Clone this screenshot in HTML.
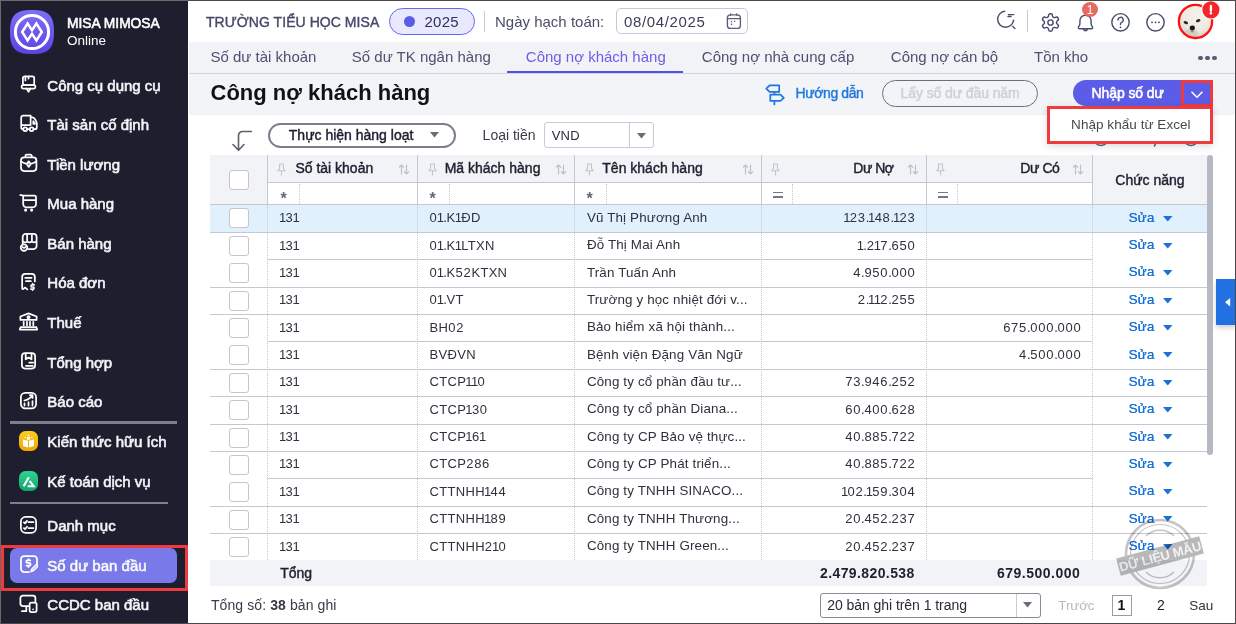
<!DOCTYPE html>
<html><head><meta charset="utf-8"><title>MISA</title>
<style>
html,body{margin:0;padding:0;}
body{width:1236px;height:624px;overflow:hidden;position:relative;background:#fff;font-family:"Liberation Sans", sans-serif;}
.t{position:absolute;white-space:nowrap;line-height:1;}
.b{position:absolute;box-sizing:border-box;}
</style></head><body>

<div class="b" style="left:0px;top:0px;width:188px;height:624px;background:#1e1f2e;"></div>
<svg class="b" style="left:10px;top:10px" width="44" height="44" viewBox="0 0 44 44">
<defs><linearGradient id="lg" x1="0" y1="0" x2="0" y2="1"><stop offset="0" stop-color="#7d6ff7"/><stop offset="1" stop-color="#5a45e2"/></linearGradient></defs>
<path d="M22 0 C38.5 0 44 5.5 44 22 C44 38.5 38.5 44 22 44 C5.5 44 0 38.5 0 22 C0 5.5 5.5 0 22 0 Z" fill="url(#lg)"/>
<circle cx="22" cy="22" r="16.6" fill="none" stroke="#fff" stroke-width="3"/>
<path d="M12.2 22 L17.6 13.6 L22 20.2 L26.4 13.6 L31.8 22 L26.4 30.4 L22 23.8 L17.6 30.4 Z" fill="none" stroke="#fff" stroke-width="2.5" stroke-linejoin="miter"/>
</svg>
<div class="t" style="left:67px;top:16.72px;font-size:13.8px;color:#ffffff;-webkit-text-stroke:0.55px #fff;">MISA MIMOSA</div>
<div class="t" style="left:67px;top:33.57px;font-size:13.5px;color:#ffffff;">Online</div>
<div class="b" style="left:1px;top:545px;width:187px;height:46px;border:3px solid #ee3b3f;"></div>
<div class="b" style="left:10px;top:548px;width:167px;height:35px;background:#7979ea;border-radius:7px;"></div>
<div class="b" style="left:10px;top:421px;width:167px;height:3px;background:#7d7f8c;"></div>
<div class="b" style="left:10px;top:502px;width:158px;height:2px;background:#7d7f8c;"></div>
<div class="t" style="left:47.3px;top:77.70px;font-size:15px;color:#f3f3f8;-webkit-text-stroke:0.6px #f3f3f8;">Công cụ dụng cụ</div>
<div class="t" style="left:47.3px;top:117.25px;font-size:15px;color:#f3f3f8;-webkit-text-stroke:0.6px #f3f3f8;">Tài sản cố định</div>
<div class="t" style="left:47.3px;top:156.80px;font-size:15px;color:#f3f3f8;-webkit-text-stroke:0.6px #f3f3f8;">Tiền lương</div>
<div class="t" style="left:47.3px;top:196.35px;font-size:15px;color:#f3f3f8;-webkit-text-stroke:0.6px #f3f3f8;">Mua hàng</div>
<div class="t" style="left:47.3px;top:235.90px;font-size:15px;color:#f3f3f8;-webkit-text-stroke:0.6px #f3f3f8;">Bán hàng</div>
<div class="t" style="left:47.3px;top:275.45px;font-size:15px;color:#f3f3f8;-webkit-text-stroke:0.6px #f3f3f8;">Hóa đơn</div>
<div class="t" style="left:47.3px;top:315.00px;font-size:15px;color:#f3f3f8;-webkit-text-stroke:0.6px #f3f3f8;">Thuế</div>
<div class="t" style="left:47.3px;top:354.55px;font-size:15px;color:#f3f3f8;-webkit-text-stroke:0.6px #f3f3f8;">Tổng hợp</div>
<div class="t" style="left:47.3px;top:394.10px;font-size:15px;color:#f3f3f8;-webkit-text-stroke:0.6px #f3f3f8;">Báo cáo</div>
<div class="t" style="left:47.3px;top:434.20px;font-size:15px;color:#f3f3f8;-webkit-text-stroke:0.6px #f3f3f8;">Kiến thức hữu ích</div>
<div class="t" style="left:47.3px;top:473.70px;font-size:15px;color:#f3f3f8;-webkit-text-stroke:0.6px #f3f3f8;">Kế toán dịch vụ</div>
<div class="t" style="left:47.3px;top:518.30px;font-size:15px;color:#f3f3f8;-webkit-text-stroke:0.6px #f3f3f8;">Danh mục</div>
<div class="t" style="left:47.3px;top:557.90px;font-size:15px;color:#ffffff;-webkit-text-stroke:0.6px #f3f3f8;">Số dư ban đầu</div>
<div class="t" style="left:47.3px;top:597.30px;font-size:15px;color:#f3f3f8;-webkit-text-stroke:0.6px #f3f3f8;">CCDC ban đầu</div>
<svg class="b" style="left:19px;top:73px;" width="20" height="22" viewBox="0 0 20 22"><rect fill="none" stroke="#fff" stroke-width="1.75" stroke-linecap="round" stroke-linejoin="round" x="3.9" y="3.3" width="11.3" height="8.7" rx="1.8"/><path fill="none" stroke="#fff" stroke-width="1.75" stroke-linecap="round" stroke-linejoin="round" d="M6.4 3.6v3.8 M9.5 3.6v2"/><rect fill="none" stroke="#fff" stroke-width="1.75" stroke-linecap="round" stroke-linejoin="round" x="2.6" y="12.1" width="13.8" height="3.4" rx="1.5"/><path fill="none" stroke="#fff" stroke-width="1.75" stroke-linecap="round" stroke-linejoin="round" d="M7.6 15.6l1.9 3.2 1.9-3.2"/></svg>
<svg class="b" style="left:18px;top:113px;" width="22" height="20" viewBox="0 0 22 20"><path fill="none" stroke="#fff" stroke-width="1.75" stroke-linecap="round" stroke-linejoin="round" d="M5.3 2.6H12.6V4.3H14.4C16.5 4.3 18.8 8.6 18.8 11.1V14.2C18.8 15.3 18.1 16.2 17 16.2H15.6 M11.6 16.2H9.2 M5.2 16.2C4 16.2 3.2 15.4 3.2 14.2V4.7C3.2 3.5 4.1 2.6 5.3 2.6 M3.2 12.1H12.6V2.6 M15.3 8.2l1.5 2.6h-1.5z"/><circle fill="none" stroke="#fff" stroke-width="1.75" stroke-linecap="round" stroke-linejoin="round" cx="7.2" cy="16.3" r="1.9"/><circle fill="none" stroke="#fff" stroke-width="1.75" stroke-linecap="round" stroke-linejoin="round" cx="13.6" cy="16.3" r="1.9"/></svg>
<svg class="b" style="left:18px;top:152px;" width="22" height="22" viewBox="0 0 22 22"><path fill="none" stroke="#fff" stroke-width="1.75" stroke-linecap="round" stroke-linejoin="round" d="M7.4 5.2V4a1.4 1.4 0 0 1 1.4-1.4h3.6A1.4 1.4 0 0 1 13.8 4v1.2"/><rect fill="none" stroke="#fff" stroke-width="1.75" stroke-linecap="round" stroke-linejoin="round" x="3" y="5.3" width="15.4" height="13.7" rx="3.2"/><path fill="none" stroke="#fff" stroke-width="1.75" stroke-linecap="round" stroke-linejoin="round" d="M3.1 9.6C5.3 10.9 7.3 11.6 8.7 11.9 M18.3 9.6C16.1 10.9 14.1 11.6 12.7 11.9 M10.7 9.3l2 2.8-2 2.8-2-2.8z"/><circle cx="10.7" cy="11.2" r="0.65" fill="#fff"/><circle cx="10.7" cy="13.1" r="0.65" fill="#fff"/></svg>
<svg class="b" style="left:18px;top:193px;" width="20" height="20" viewBox="0 0 20 20"><path fill="none" stroke="#fff" stroke-width="1.75" stroke-linecap="round" stroke-linejoin="round" d="M2.2 2H3.3C4.4 2 5.2 2.9 5.2 4V11.3A3 3 0 0 0 8.2 14.3H15A3 3 0 0 0 18 11.3V4.1A1.5 1.5 0 0 0 16.5 2.6H4.6 M6.8 7.1H18"/><circle cx="7.6" cy="17.1" r="1.55" fill="#fff"/><circle cx="13.6" cy="17.1" r="1.55" fill="#fff"/></svg>
<svg class="b" style="left:19px;top:231px;" width="21" height="21" viewBox="0 0 21 21"><path fill="none" stroke="#fff" stroke-width="1.75" stroke-linecap="round" stroke-linejoin="round" d="M3.7 12.4V5.9A3 3 0 0 1 6.7 2.9H14.6A3 3 0 0 1 17.6 5.9V15.1A3 3 0 0 1 14.6 18.1H8.9 M3.7 10.2Q5.9 12.2 8.1 10.6Q10.5 12.2 12.9 10.6Q15.3 12.2 17.6 10.2 M8.1 3.2V10.4 M12.9 3.2V10.4"/><circle fill="none" stroke="#fff" stroke-width="1.75" stroke-linecap="round" stroke-linejoin="round" cx="5" cy="16.6" r="3.3" fill="#1e1f2e"/><path fill="none" stroke="#fff" stroke-width="1.75" stroke-linecap="round" stroke-linejoin="round" d="M3.6 15.9Q5 17.9 6.4 15.9"/></svg>
<svg class="b" style="left:18px;top:271px;" width="22" height="22" viewBox="0 0 22 22"><path fill="none" stroke="#fff" stroke-width="1.75" stroke-linecap="round" stroke-linejoin="round" d="M16.85 10.4V6a3.2 3.2 0 0 0-3.2-3.2H7.35a3.2 3.2 0 0 0-3.2 3.2V17.4c0 .6.5.8 1 .5l2-1.3 2.2 1.8 M7.2 6.8h6.4 M8 10.2h4.8"/><path fill="none" stroke="#fff" stroke-width="1.6" stroke-linecap="round" stroke-linejoin="round" d="M16.3 13.9h-2.3a1.05 1.05 0 0 0 0 2.1h1.1a1.05 1.05 0 0 1 0 2.1h-2.3 M14.6 12.6v1 M14.6 18.2v1"/></svg>
<svg class="b" style="left:18px;top:311px;" width="22" height="22" viewBox="0 0 22 22"><path fill="none" stroke="#fff" stroke-width="1.75" stroke-linecap="round" stroke-linejoin="round" d="M10.5 2.4L18.6 5.5V8.9H2.4V5.5Z M5.7 10.8v3.4 M9 10.8v3.4 M12 10.8v3.4 M15.3 10.8v3.4 M2.6 16.2H18.4L19.2 18.6H1.8Z"/><circle fill="none" stroke="#fff" stroke-width="1.75" stroke-linecap="round" stroke-linejoin="round" cx="10.5" cy="6.2" r="1.1"/></svg>
<svg class="b" style="left:20px;top:351px;" width="18" height="20" viewBox="0 0 18 20"><rect fill="none" stroke="#fff" stroke-width="1.75" stroke-linecap="round" stroke-linejoin="round" x="1.9" y="2.2" width="13.2" height="15.3" rx="3.2"/><path fill="none" stroke="#fff" stroke-width="1.75" stroke-linecap="round" stroke-linejoin="round" d="M5.7 2.4V8.3L8.6 6.5L11.5 8.3V2.4 M9.2 11.6h4 M5.9 14.8h6.9"/></svg>
<svg class="b" style="left:19px;top:391px;" width="19" height="19" viewBox="0 0 19 19"><rect fill="none" stroke="#fff" stroke-width="1.75" stroke-linecap="round" stroke-linejoin="round" x="1.9" y="1.8" width="15.2" height="15.5" rx="4.3"/><path fill="none" stroke="#fff" stroke-width="1.75" stroke-linecap="round" stroke-linejoin="round" d="M5.4 9.5Q10.2 8.6 13.3 4.5 M10.9 4.2H13.6V6.9 M5.5 12.3v2.3 M9.5 11v3.6 M13.5 10v4.6"/></svg>
<svg class="b" style="left:19px;top:431px;" width="20" height="20" viewBox="0 0 20 20"><defs><linearGradient id="yl" x1="0" y1="0" x2="0" y2="1"><stop offset="0" stop-color="#fbcf1f"/><stop offset="1" stop-color="#f0a600"/></linearGradient></defs><rect x="0" y="0" width="19" height="20" rx="6.5" fill="url(#yl)"/><path d="M4 8.6L9 9.8v6.6L4 15z M15 8.6L10 9.8v6.6L15 15z" fill="#fff"/><rect x="8" y="5.8" width="3" height="2.8" fill="#fff"/><circle cx="6.3" cy="6.4" r="0.7" fill="#fff"/><circle cx="9.5" cy="4.2" r="0.7" fill="#fff"/><circle cx="12.7" cy="6.4" r="0.7" fill="#fff"/></svg>
<svg class="b" style="left:19px;top:471px;" width="20" height="20" viewBox="0 0 20 20"><defs><linearGradient id="gl" x1="0" y1="0" x2="0" y2="1"><stop offset="0" stop-color="#2fd391"/><stop offset="1" stop-color="#12a56d"/></linearGradient></defs><rect x="0" y="0" width="19" height="20" rx="6.5" fill="url(#gl)"/><path d="M4.6 15.2L9.8 6.3 M10.6 9.9L14.6 15.2H8.6" fill="none" stroke="#fff" stroke-width="2.1" stroke-linejoin="miter" stroke-linecap="butt"/></svg>
<svg class="b" style="left:19px;top:515px;" width="20" height="20" viewBox="0 0 20 20"><rect fill="none" stroke="#fff" stroke-width="1.75" stroke-linecap="round" stroke-linejoin="round" x="1.9" y="1.9" width="15.2" height="16" rx="4.8"/><path fill="none" stroke="#fff" stroke-width="1.75" stroke-linecap="round" stroke-linejoin="round" d="M4.9 7.4L6 8.4L8 5.9 M4.9 13.2L6 14.2L8 11.7 M9.5 7.2h5 M9.5 13.1h5"/></svg>
<svg class="b" style="left:20px;top:555px;" width="18" height="18" viewBox="0 0 18 18"><path fill="none" stroke="#fff" stroke-width="1.75" stroke-linecap="round" stroke-linejoin="round" d="M9 17H4.3A3.3 3.3 0 0 1 1 13.7V4.3A3.3 3.3 0 0 1 4.3 1h9.4A3.3 3.3 0 0 1 17 4.3V9"/><path fill="none" stroke="#fff" stroke-width="1.75" stroke-linecap="round" stroke-linejoin="round" d="M10.3 5.3H7.5a1.3 1.3 0 0 0 0 2.6h1.8a1.3 1.3 0 0 1 0 2.6H6.5 M8.5 4v1.3 M8.5 10.5v1.5"/><path fill="none" stroke="#fff" stroke-width="1.75" stroke-linecap="round" stroke-linejoin="round" d="M11 16.5l1-2.5l4-4a1.1 1.1 0 0 1 1.5 1.5l-4 4z"/></svg>
<svg class="b" style="left:19px;top:594px;" width="20" height="20" viewBox="0 0 20 20"><path fill="none" stroke="#fff" stroke-width="1.75" stroke-linecap="round" stroke-linejoin="round" d="M9.6 12.2H4A2.6 2.6 0 0 1 1.4 9.6V4.3A2.6 2.6 0 0 1 4 1.7H13.8A2.6 2.6 0 0 1 16.4 4.3V7.4 M7.3 12.4V17.2H2.9"/><rect fill="none" stroke="#fff" stroke-width="1.75" stroke-linecap="round" stroke-linejoin="round" x="10.6" y="8.7" width="7" height="9.4" rx="1.8"/><circle cx="14.1" cy="15.3" r="0.85" fill="#fff"/></svg>
<div class="b" style="left:188px;top:0px;width:1048px;height:42px;background:#fff;"></div>
<div class="t" style="left:206px;top:14.85px;font-size:14px;color:#474a6b;letter-spacing:0.05px;-webkit-text-stroke:0.4px #474a6b;">TRƯỜNG TIỂU HỌC MISA</div>
<div class="b" style="left:389px;top:8px;width:86px;height:26.5px;background:#e9e9fd;border:1px solid #6366f1;border-radius:14px;"></div>
<div class="b" style="left:404px;top:16px;width:11px;height:11px;background:#5b5ce8;border-radius:50%;"></div>
<div class="t" style="left:424.5px;top:14.10px;font-size:15px;color:#2d2f5e;letter-spacing:0.25px;">2025</div>
<div class="b" style="left:484px;top:11px;width:1px;height:21px;background:#c9cbd9;"></div>
<div class="t" style="left:495px;top:14.30px;font-size:15px;color:#4b4e66;">Ngày hạch toán:</div>
<div class="b" style="left:616px;top:8px;width:132px;height:26px;border:1px solid #c6c8da;border-radius:5px;background:#fff;"></div>
<div class="t" style="left:624px;top:14.30px;font-size:15px;color:#3a3d55;letter-spacing:0.65px;">08/04/2025</div>
<svg class="b" style="left:726px;top:13px;" width="16" height="17" viewBox="0 0 16 17"><g fill="none" stroke="#5a5e7c" stroke-width="1.35" stroke-linecap="round"><rect x="1.4" y="1.8" width="13" height="13.6" rx="3"/><path d="M1.4 5.6h13 M4.6 1v1.2 M10.8 1v1.2"/></g><path stroke="#5a5e7c" stroke-width="1.3" d="M5.5 8v1.3 M8 8.4h1.2 M5.5 10.6v1.3"/></svg>
<svg class="b" style="left:996px;top:10px;" width="21" height="21" viewBox="0 0 21 21"><path fill="none" stroke="#474b6c" stroke-width="1.4" stroke-linecap="round" stroke-linejoin="round" d="M8.6 1.3A8 8 0 1 0 17.6 10.2 M12.4 4.6h5.4 M12 6.5h3" /><path fill="none" stroke="#474b6c" stroke-width="1.4" stroke-linecap="round" stroke-linejoin="round" d="M16.8 16.2l2.2 2.4"/></svg>
<div class="b" style="left:1027px;top:10px;width:1px;height:22px;background:#c5c8da;"></div>
<svg class="b" style="left:1040px;top:11.5px;" width="21" height="21" viewBox="0 0 24 24"><path fill="none" stroke="#474b6c" stroke-width="1.65" stroke-linejoin="round" d="M12.22 2h-.44a2 2 0 0 0-2 2v.18a2 2 0 0 1-1 1.73l-.43.25a2 2 0 0 1-2 0l-.15-.08a2 2 0 0 0-2.73.73l-.22.38a2 2 0 0 0 .73 2.73l.15.1a2 2 0 0 1 1 1.72v.51a2 2 0 0 1-1 1.74l-.15.09a2 2 0 0 0-.73 2.73l.22.38a2 2 0 0 0 2.73.73l.15-.08a2 2 0 0 1 2 0l.43.25a2 2 0 0 1 1 1.73V20a2 2 0 0 0 2 2h.44a2 2 0 0 0 2-2v-.18a2 2 0 0 1 1-1.73l.43-.25a2 2 0 0 1 2 0l.15.08a2 2 0 0 0 2.73-.73l.22-.39a2 2 0 0 0-.73-2.73l-.15-.08a2 2 0 0 1-1-1.74v-.5a2 2 0 0 1 1-1.74l.15-.09a2 2 0 0 0 .73-2.73l-.22-.38a2 2 0 0 0-2.73-.73l-.15.08a2 2 0 0 1-2 0l-.43-.25a2 2 0 0 1-1-1.73V4a2 2 0 0 0-2-2z"/><circle fill="none" stroke="#474b6c" stroke-width="1.65" cx="12" cy="12" r="3"/></svg>
<svg class="b" style="left:1076px;top:12.5px;" width="19" height="20" viewBox="0 0 19 20"><path fill="none" stroke="#474b6c" stroke-width="1.4" stroke-linecap="round" stroke-linejoin="round" d="M9.5 2.2a5.6 5.6 0 0 0-5.6 5.6v3.2c0 1.5-1.6 2.6-1.6 3.8c0 .7.5 1 1.2 1h12c.7 0 1.2-.3 1.2-1c0-1.2-1.6-2.3-1.6-3.8V7.8a5.6 5.6 0 0 0-5.6-5.6z M7.6 16.2c.3 1 1 1.6 1.9 1.6s1.6-.6 1.9-1.6"/></svg>
<div class="b" style="left:1082px;top:2px;width:16px;height:15px;background:#e66a60;border-radius:50%;"></div>
<div class="t" style="left:1082.0px;width:16px;top:4.34px;font-size:12px;color:#fff;text-align:center;">1</div>
<svg class="b" style="left:1110px;top:12px;" width="21" height="21" viewBox="0 0 21 21"><circle fill="none" stroke="#474b6c" stroke-width="1.4" stroke-linecap="round" stroke-linejoin="round" cx="10.5" cy="10.3" r="8.7"/><path fill="none" stroke="#474b6c" stroke-width="1.4" stroke-linecap="round" stroke-linejoin="round" d="M8 8a2.6 2.6 0 1 1 3.6 2.3c-.8.4-1.1.9-1.1 1.7v.5"/><circle cx="10.5" cy="15.3" r="0.9" fill="#3f4366"/></svg>
<svg class="b" style="left:1145px;top:12px;" width="21" height="21" viewBox="0 0 21 21"><circle fill="none" stroke="#474b6c" stroke-width="1.4" stroke-linecap="round" stroke-linejoin="round" cx="10.5" cy="10.3" r="8.7"/><circle cx="7" cy="10.3" r="0.9" fill="#3f4366"/><circle cx="10.5" cy="10.3" r="0.9" fill="#3f4366"/><circle cx="14" cy="10.3" r="0.9" fill="#3f4366"/></svg>
<svg class="b" style="left:1177px;top:0px" width="46" height="41" viewBox="0 -3 46 41">
<defs><radialGradient id="av" cx="0.5" cy="0.35" r="0.7"><stop offset="0" stop-color="#f5f3ee"/><stop offset="0.55" stop-color="#ece8de"/><stop offset="0.85" stop-color="#cfccbd"/><stop offset="1" stop-color="#aeae9c"/></radialGradient>
<filter id="bl" x="-20%" y="-20%" width="140%" height="140%"><feGaussianBlur stdDeviation="0.45"/></filter>
<clipPath id="avc"><circle cx="18.5" cy="18.4" r="15.8"/></clipPath></defs>
<g clip-path="url(#avc)">
<rect x="0" y="0" width="40" height="38" fill="url(#av)"/>
<g filter="url(#bl)">
<ellipse cx="14" cy="30" rx="7" ry="4" fill="#c9c8b8" opacity="0.7"/>
<ellipse cx="8.8" cy="19.6" rx="2.3" ry="1.5" transform="rotate(20 8.8 19.6)" fill="#2a2622"/>
<ellipse cx="21.2" cy="17.6" rx="2.3" ry="1.5" transform="rotate(-20 21.2 17.6)" fill="#2a2622"/>
<ellipse cx="15.3" cy="25" rx="2.6" ry="2.4" fill="#1b1816"/>
<ellipse cx="15.3" cy="28.5" rx="1.6" ry="1" fill="#6d6458" opacity="0.6"/>
</g>
</g>
<circle cx="18.5" cy="18.4" r="16.6" fill="none" stroke="#ff1010" stroke-width="2.3"/>
<circle cx="33.9" cy="6.8" r="9.8" fill="#fff"/>
<circle cx="33.9" cy="6.8" r="8.6" fill="#f5262a"/>
<path d="M33.9 3v4.8" stroke="#fff" stroke-width="2.3" stroke-linecap="round"/>
<circle cx="33.9" cy="10.3" r="1.2" fill="#fff"/>
</svg>
<div class="b" style="left:189px;top:42px;width:1047px;height:31px;background:#f2f3f7;"></div>
<div class="b" style="left:189px;top:73px;width:1047px;height:1px;background:#d2d4dd;"></div>
<div class="t" style="left:210.5px;top:49.20px;font-size:15px;color:#4d5170;">Số dư tài khoản</div>
<div class="t" style="left:351.8px;top:49.20px;font-size:15px;color:#4d5170;">Số dư TK ngân hàng</div>
<div class="t" style="left:525.8px;top:49.20px;font-size:15px;color:#6a60ea;">Công nợ khách hàng</div>
<div class="b" style="left:507px;top:71px;width:176px;height:2px;background:#5550e6;"></div>
<div class="t" style="left:701.8px;top:49.20px;font-size:15px;color:#4d5170;">Công nợ nhà cung cấp</div>
<div class="t" style="left:890.8px;top:49.20px;font-size:15px;color:#4d5170;">Công nợ cán bộ</div>
<div class="t" style="left:1034px;top:49.20px;font-size:15px;color:#4d5170;">Tồn kho</div>
<div class="b" style="left:1198.2px;top:55.8px;width:4.6px;height:4.6px;background:#585c70;border-radius:50%;"></div>
<div class="b" style="left:1205.2px;top:55.8px;width:4.6px;height:4.6px;background:#585c70;border-radius:50%;"></div>
<div class="b" style="left:1212.2px;top:55.8px;width:4.6px;height:4.6px;background:#585c70;border-radius:50%;"></div>
<div class="b" style="left:189px;top:74px;width:1047px;height:41px;background:#f3f4f8;"></div>
<div class="t" style="left:210.5px;top:82.28px;font-size:22px;font-weight:700;color:#111217;">Công nợ khách hàng</div>
<svg class="b" style="left:765px;top:84px;" width="22" height="22" viewBox="0 0 22 22"><path fill="none" stroke="#1f78dd" stroke-width="1.75" stroke-linecap="round" stroke-linejoin="round" d="M14.2 1.4H4.6L1.3 4.6l3.3 3.3h9.6z M9.4 7.9v2.7 M5.3 10.6h10.2l3.3 3.2-3.3 3.1H5.3z M9.4 16.9v3.5"/></svg>
<div class="t" style="left:795.6px;top:86.45px;font-size:14px;color:#1f78dd;letter-spacing:-0.4px;-webkit-text-stroke:0.4px #1f78dd;">Hướng dẫn</div>
<div class="b" style="left:882px;top:80px;width:156px;height:26.5px;border:1.3px solid #6d6e78;border-radius:14px;"></div>
<div class="t" style="left:900.6px;top:86.45px;font-size:14px;color:#cfd0d9;letter-spacing:-0.1px;-webkit-text-stroke:0.5px #cfd0d9;">Lấy số dư đầu năm</div>
<div class="b" style="left:1073px;top:80px;width:138px;height:26px;background:#5b5ce8;border-radius:13px 4px 4px 13px;"></div>
<div class="t" style="left:1091.6px;top:86.05px;font-size:14px;color:#ffffff;letter-spacing:-0.1px;-webkit-text-stroke:0.55px #fff;">Nhập số dư</div>
<div class="b" style="left:1181px;top:80px;width:32px;height:26.5px;border:3px solid #ee3b3f;"></div>
<svg class="b" style="left:1191px;top:91px;" width="12" height="8" viewBox="0 0 12 8"><path d="M1 1.2l5 5 5-5" fill="none" stroke="#fff" stroke-width="1.6" stroke-linecap="round" stroke-linejoin="round"/></svg>
<svg class="b" style="left:231px;top:129px;" width="22" height="23" viewBox="0 0 22 23"><path d="M20.5 2.5h-9a4 4 0 0 0-4 4V21 M2 15.5l5.5 5.8 5.5-5.8" fill="none" stroke="#5d5f6b" stroke-width="1.6" stroke-linecap="round" stroke-linejoin="round"/></svg>
<div class="b" style="left:268px;top:122.5px;width:188px;height:25px;border:2px solid #7c7e8a;border-radius:13px;"></div>
<div class="t" style="left:288.8px;top:127.85px;font-size:14px;color:#1c1d2e;-webkit-text-stroke:0.42px #1c1d2e;">Thực hiện hàng loạt</div>
<svg class="b" style="left:430px;top:132px;" width="9" height="6" viewBox="0 0 9 6"><path d="M0 0h9L4.5 5.5z" fill="#6a6c78"/></svg>
<div class="t" style="left:482.6px;top:128.25px;font-size:14px;color:#3a3b48;">Loại tiền</div>
<div class="b" style="left:544px;top:122px;width:110px;height:26px;border:1px solid #c9cad3;border-radius:3px;background:#fff;"></div>
<div class="b" style="left:629px;top:123px;width:1px;height:24px;background:#c9cad3;"></div>
<div class="t" style="left:551.7px;top:129.10px;font-size:13px;color:#2a2b38;letter-spacing:0.2px;">VND</div>
<svg class="b" style="left:637px;top:133px;" width="9" height="6" viewBox="0 0 9 6"><path d="M0 0h9L4.5 5.5z" fill="#6a6c78"/></svg>
<div class="b" style="left:210px;top:155px;width:997px;height:49.5px;background:#f2f3f7;"></div>
<div class="b" style="left:268px;top:183px;width:824px;height:21px;background:#fff;"></div>
<div class="b" style="left:268px;top:182px;width:824px;height:1px;background:#c6c7d0;"></div>
<div class="b" style="left:210px;top:204px;width:997px;height:1px;background:#c6c7d0;"></div>
<div class="b" style="left:267px;top:155px;width:1px;height:49px;background:#c6c7d0;"></div>
<div class="b" style="left:417px;top:155px;width:1px;height:49px;background:#c6c7d0;"></div>
<div class="b" style="left:574px;top:155px;width:1px;height:49px;background:#c6c7d0;"></div>
<div class="b" style="left:761px;top:155px;width:1px;height:49px;background:#c6c7d0;"></div>
<div class="b" style="left:926px;top:155px;width:1px;height:49px;background:#c6c7d0;"></div>
<div class="b" style="left:1092px;top:155px;width:1px;height:49px;background:#c6c7d0;"></div>
<div class="b" style="left:229px;top:170px;width:20px;height:20px;border:1px solid #c4c5cd;border-radius:3px;background:#fff;"></div>
<svg class="b" style="left:277px;top:163px;" width="9" height="13" viewBox="0 0 9 13"><path d="M2.6 1h3.8v4.5l1.7 2.2H0.9l1.7-2.2z M4.5 7.7v4.3" fill="none" stroke="#c3c4cc" stroke-width="1.1" stroke-linecap="round" stroke-linejoin="round"/></svg>
<div class="t" style="left:295.4px;top:161.35px;font-size:14px;color:#1e1f30;-webkit-text-stroke:0.42px #1e1f30;">Số tài khoản</div>
<svg class="b" style="left:399px;top:163.5px;" width="11" height="11" viewBox="0 0 11 11"><path d="M2.5 10V1 M0.2 3.3L2.5 1l2.3 2.3 M7.5 1v9 M5.2 7.7L7.5 10l2.3-2.3" fill="none" stroke="#bec0c9" stroke-width="1.15" stroke-linecap="round" stroke-linejoin="round"/></svg>
<svg class="b" style="left:428px;top:163px;" width="9" height="13" viewBox="0 0 9 13"><path d="M2.6 1h3.8v4.5l1.7 2.2H0.9l1.7-2.2z M4.5 7.7v4.3" fill="none" stroke="#c3c4cc" stroke-width="1.1" stroke-linecap="round" stroke-linejoin="round"/></svg>
<div class="t" style="left:444.7px;top:161.35px;font-size:14px;color:#1e1f30;-webkit-text-stroke:0.42px #1e1f30;">Mã khách hàng</div>
<svg class="b" style="left:556px;top:163.5px;" width="11" height="11" viewBox="0 0 11 11"><path d="M2.5 10V1 M0.2 3.3L2.5 1l2.3 2.3 M7.5 1v9 M5.2 7.7L7.5 10l2.3-2.3" fill="none" stroke="#bec0c9" stroke-width="1.15" stroke-linecap="round" stroke-linejoin="round"/></svg>
<svg class="b" style="left:585px;top:163px;" width="9" height="13" viewBox="0 0 9 13"><path d="M2.6 1h3.8v4.5l1.7 2.2H0.9l1.7-2.2z M4.5 7.7v4.3" fill="none" stroke="#c3c4cc" stroke-width="1.1" stroke-linecap="round" stroke-linejoin="round"/></svg>
<div class="t" style="left:602.3px;top:161.35px;font-size:14px;color:#1e1f30;-webkit-text-stroke:0.42px #1e1f30;">Tên khách hàng</div>
<svg class="b" style="left:742.5px;top:163.5px;" width="11" height="11" viewBox="0 0 11 11"><path d="M2.5 10V1 M0.2 3.3L2.5 1l2.3 2.3 M7.5 1v9 M5.2 7.7L7.5 10l2.3-2.3" fill="none" stroke="#bec0c9" stroke-width="1.15" stroke-linecap="round" stroke-linejoin="round"/></svg>
<svg class="b" style="left:771px;top:163px;" width="9" height="13" viewBox="0 0 9 13"><path d="M2.6 1h3.8v4.5l1.7 2.2H0.9l1.7-2.2z M4.5 7.7v4.3" fill="none" stroke="#c3c4cc" stroke-width="1.1" stroke-linecap="round" stroke-linejoin="round"/></svg>
<div class="t" style="right:342.5px;top:161.35px;font-size:14px;color:#1e1f30;letter-spacing:-0.5px;text-align:right;-webkit-text-stroke:0.42px #1e1f30;">Dư Nợ</div>
<svg class="b" style="left:907.5px;top:163.5px;" width="11" height="11" viewBox="0 0 11 11"><path d="M2.5 10V1 M0.2 3.3L2.5 1l2.3 2.3 M7.5 1v9 M5.2 7.7L7.5 10l2.3-2.3" fill="none" stroke="#bec0c9" stroke-width="1.15" stroke-linecap="round" stroke-linejoin="round"/></svg>
<svg class="b" style="left:936px;top:163px;" width="9" height="13" viewBox="0 0 9 13"><path d="M2.6 1h3.8v4.5l1.7 2.2H0.9l1.7-2.2z M4.5 7.7v4.3" fill="none" stroke="#c3c4cc" stroke-width="1.1" stroke-linecap="round" stroke-linejoin="round"/></svg>
<div class="t" style="right:176.5px;top:161.35px;font-size:14px;color:#1e1f30;letter-spacing:-0.4px;text-align:right;-webkit-text-stroke:0.42px #1e1f30;">Dư Có</div>
<svg class="b" style="left:1073px;top:163.5px;" width="11" height="11" viewBox="0 0 11 11"><path d="M2.5 10V1 M0.2 3.3L2.5 1l2.3 2.3 M7.5 1v9 M5.2 7.7L7.5 10l2.3-2.3" fill="none" stroke="#bec0c9" stroke-width="1.15" stroke-linecap="round" stroke-linejoin="round"/></svg>
<div class="t" style="left:1095.0px;width:110px;top:172.75px;font-size:14px;color:#1e1f30;text-align:center;-webkit-text-stroke:0.42px #1e1f30;">Chức năng</div>
<div class="t" style="left:280.5px;top:191.46px;font-size:16px;font-weight:700;color:#65666f;">*</div>
<div class="t" style="left:429.5px;top:191.46px;font-size:16px;font-weight:700;color:#65666f;">*</div>
<div class="t" style="left:586.5px;top:191.46px;font-size:16px;font-weight:700;color:#65666f;">*</div>
<div class="b" style="left:772.5px;top:191.5px;width:10px;height:1.5px;background:#777883;"></div>
<div class="b" style="left:772.5px;top:196px;width:10px;height:1.5px;background:#777883;"></div>
<div class="b" style="left:937.5px;top:191.5px;width:10px;height:1.5px;background:#777883;"></div>
<div class="b" style="left:937.5px;top:196px;width:10px;height:1.5px;background:#777883;"></div>
<div class="b" style="left:299px;top:184px;width:0;height:19.5px;border-left:1px dotted #c6c7d0;"></div>
<div class="b" style="left:449px;top:184px;width:0;height:19.5px;border-left:1px dotted #c6c7d0;"></div>
<div class="b" style="left:606px;top:184px;width:0;height:19.5px;border-left:1px dotted #c6c7d0;"></div>
<div class="b" style="left:792px;top:184px;width:0;height:19.5px;border-left:1px dotted #c6c7d0;"></div>
<div class="b" style="left:957px;top:184px;width:0;height:19.5px;border-left:1px dotted #c6c7d0;"></div>
<div class="b" style="left:210px;top:205px;width:997px;height:27px;background:#e1f0fd;"></div>
<div class="b" style="left:210px;top:232px;width:997px;height:1px;background:#c6c7d0;"></div>
<div class="b" style="left:229px;top:208px;width:20px;height:20px;border:1px solid #c4c5cd;border-radius:3px;background:#fff;"></div>
<div class="t" style="left:279.8px;top:211.20px;font-size:13px;color:#30313d;"><span style="display:inline-block;width:5.7px;text-indent:-0.9px">1</span><span style="letter-spacing:0.72px">3</span><span style="display:inline-block;width:5.7px;text-indent:-0.9px">1</span></div>
<div class="t" style="left:429.6px;top:211.20px;font-size:13px;color:#30313d;"><span style="letter-spacing:0.72px">0</span><span style="display:inline-block;width:5.7px;text-indent:-0.9px">1</span><span style="letter-spacing:-0.3px">.</span><span style="letter-spacing:0.3px">K</span><span style="display:inline-block;width:5.7px;text-indent:-0.9px">1</span><span style="letter-spacing:0.3px">ĐD</span></div>
<div class="t" style="left:586.9px;top:210.86px;font-size:13.4px;color:#30313d;letter-spacing:0.15px;">Vũ Thị Phương Anh</div>
<div class="t" style="right:320.56999999999994px;top:211.20px;font-size:13px;color:#30313d;text-align:right;"><span style="display:inline-block;width:5.7px;text-indent:-0.9px">1</span><span style="letter-spacing:0.72px">23</span><span style="letter-spacing:-0.3px">.</span><span style="display:inline-block;width:5.7px;text-indent:-0.9px">1</span><span style="letter-spacing:0.72px">48</span><span style="letter-spacing:-0.3px">.</span><span style="display:inline-block;width:5.7px;text-indent:-0.9px">1</span><span style="letter-spacing:0.72px">23</span></div>
<div class="t" style="left:1128.6px;top:210.77px;font-size:13.5px;color:#1a72d8;text-shadow:0.25px 0 0 #1a72d8;">Sửa</div>
<svg class="b" style="left:1162.5px;top:216px;" width="10" height="6" viewBox="0 0 10 6"><path d="M0 0h9.5L4.75 5.5z" fill="#1a72d8"/></svg>
<div class="b" style="left:268px;top:259px;width:824px;height:1px;background:#c6c7d0;"></div>
<div class="b" style="left:229px;top:236px;width:20px;height:20px;border:1px solid #c4c5cd;border-radius:3px;background:#fff;"></div>
<div class="t" style="left:279.8px;top:238.56px;font-size:13px;color:#30313d;"><span style="display:inline-block;width:5.7px;text-indent:-0.9px">1</span><span style="letter-spacing:0.72px">3</span><span style="display:inline-block;width:5.7px;text-indent:-0.9px">1</span></div>
<div class="t" style="left:429.6px;top:238.56px;font-size:13px;color:#30313d;"><span style="letter-spacing:0.72px">0</span><span style="display:inline-block;width:5.7px;text-indent:-0.9px">1</span><span style="letter-spacing:-0.3px">.</span><span style="letter-spacing:0.3px">K</span><span style="display:inline-block;width:5.7px;text-indent:-0.9px">1</span><span style="letter-spacing:0.3px">LTXN</span></div>
<div class="t" style="left:586.9px;top:238.22px;font-size:13.4px;color:#30313d;letter-spacing:0.15px;">Đỗ Thị Mai Anh</div>
<div class="t" style="right:320.56999999999994px;top:238.56px;font-size:13px;color:#30313d;text-align:right;"><span style="display:inline-block;width:5.7px;text-indent:-0.9px">1</span><span style="letter-spacing:-0.3px">.</span><span style="letter-spacing:0.72px">2</span><span style="display:inline-block;width:5.7px;text-indent:-0.9px">1</span><span style="letter-spacing:0.72px">7</span><span style="letter-spacing:-0.3px">.</span><span style="letter-spacing:0.72px">650</span></div>
<div class="t" style="left:1128.6px;top:238.13px;font-size:13.5px;color:#1a72d8;text-shadow:0.25px 0 0 #1a72d8;">Sửa</div>
<svg class="b" style="left:1162.5px;top:243px;" width="10" height="6" viewBox="0 0 10 6"><path d="M0 0h9.5L4.75 5.5z" fill="#1a72d8"/></svg>
<div class="b" style="left:210px;top:287px;width:997px;height:1px;background:#c6c7d0;"></div>
<div class="b" style="left:229px;top:263px;width:20px;height:20px;border:1px solid #c4c5cd;border-radius:3px;background:#fff;"></div>
<div class="t" style="left:279.8px;top:265.92px;font-size:13px;color:#30313d;"><span style="display:inline-block;width:5.7px;text-indent:-0.9px">1</span><span style="letter-spacing:0.72px">3</span><span style="display:inline-block;width:5.7px;text-indent:-0.9px">1</span></div>
<div class="t" style="left:429.6px;top:265.92px;font-size:13px;color:#30313d;"><span style="letter-spacing:0.72px">0</span><span style="display:inline-block;width:5.7px;text-indent:-0.9px">1</span><span style="letter-spacing:-0.3px">.</span><span style="letter-spacing:0.3px">K</span><span style="letter-spacing:0.72px">52</span><span style="letter-spacing:0.3px">KTXN</span></div>
<div class="t" style="left:586.9px;top:265.58px;font-size:13.4px;color:#30313d;letter-spacing:0.15px;">Trần Tuấn Anh</div>
<div class="t" style="right:320.56999999999994px;top:265.92px;font-size:13px;color:#30313d;text-align:right;"><span style="letter-spacing:0.72px">4</span><span style="letter-spacing:-0.3px">.</span><span style="letter-spacing:0.72px">950</span><span style="letter-spacing:-0.3px">.</span><span style="letter-spacing:0.72px">000</span></div>
<div class="t" style="left:1128.6px;top:265.49px;font-size:13.5px;color:#1a72d8;text-shadow:0.25px 0 0 #1a72d8;">Sửa</div>
<svg class="b" style="left:1162.5px;top:270px;" width="10" height="6" viewBox="0 0 10 6"><path d="M0 0h9.5L4.75 5.5z" fill="#1a72d8"/></svg>
<div class="b" style="left:210px;top:314px;width:997px;height:1px;background:#c6c7d0;"></div>
<div class="b" style="left:229px;top:291px;width:20px;height:20px;border:1px solid #c4c5cd;border-radius:3px;background:#fff;"></div>
<div class="t" style="left:279.8px;top:293.28px;font-size:13px;color:#30313d;"><span style="display:inline-block;width:5.7px;text-indent:-0.9px">1</span><span style="letter-spacing:0.72px">3</span><span style="display:inline-block;width:5.7px;text-indent:-0.9px">1</span></div>
<div class="t" style="left:429.6px;top:293.28px;font-size:13px;color:#30313d;"><span style="letter-spacing:0.72px">0</span><span style="display:inline-block;width:5.7px;text-indent:-0.9px">1</span><span style="letter-spacing:-0.3px">.</span><span style="letter-spacing:0.3px">VT</span></div>
<div class="t" style="left:586.9px;top:292.94px;font-size:13.4px;color:#30313d;letter-spacing:0.15px;">Trường y học nhiệt đới v...</div>
<div class="t" style="right:320.56999999999994px;top:293.28px;font-size:13px;color:#30313d;text-align:right;"><span style="letter-spacing:0.72px">2</span><span style="letter-spacing:-0.3px">.</span><span style="display:inline-block;width:5.7px;text-indent:-0.9px">1</span><span style="display:inline-block;width:5.7px;text-indent:-0.9px">1</span><span style="letter-spacing:0.72px">2</span><span style="letter-spacing:-0.3px">.</span><span style="letter-spacing:0.72px">255</span></div>
<div class="t" style="left:1128.6px;top:292.85px;font-size:13.5px;color:#1a72d8;text-shadow:0.25px 0 0 #1a72d8;">Sửa</div>
<svg class="b" style="left:1162.5px;top:298px;" width="10" height="6" viewBox="0 0 10 6"><path d="M0 0h9.5L4.75 5.5z" fill="#1a72d8"/></svg>
<div class="b" style="left:268px;top:341px;width:824px;height:1px;background:#c6c7d0;"></div>
<div class="b" style="left:229px;top:318px;width:20px;height:20px;border:1px solid #c4c5cd;border-radius:3px;background:#fff;"></div>
<div class="t" style="left:279.8px;top:320.64px;font-size:13px;color:#30313d;"><span style="display:inline-block;width:5.7px;text-indent:-0.9px">1</span><span style="letter-spacing:0.72px">3</span><span style="display:inline-block;width:5.7px;text-indent:-0.9px">1</span></div>
<div class="t" style="left:429.6px;top:320.64px;font-size:13px;color:#30313d;"><span style="letter-spacing:0.3px">BH</span><span style="letter-spacing:0.72px">02</span></div>
<div class="t" style="left:586.9px;top:320.30px;font-size:13.4px;color:#30313d;letter-spacing:0.15px;">Bảo hiểm xã hội thành...</div>
<div class="t" style="right:154.67000000000007px;top:320.64px;font-size:13px;color:#30313d;text-align:right;"><span style="letter-spacing:0.72px">675</span><span style="letter-spacing:-0.3px">.</span><span style="letter-spacing:0.72px">000</span><span style="letter-spacing:-0.3px">.</span><span style="letter-spacing:0.72px">000</span></div>
<div class="t" style="left:1128.6px;top:320.21px;font-size:13.5px;color:#1a72d8;text-shadow:0.25px 0 0 #1a72d8;">Sửa</div>
<svg class="b" style="left:1162.5px;top:325px;" width="10" height="6" viewBox="0 0 10 6"><path d="M0 0h9.5L4.75 5.5z" fill="#1a72d8"/></svg>
<div class="b" style="left:210px;top:369px;width:997px;height:1px;background:#c6c7d0;"></div>
<div class="b" style="left:229px;top:345px;width:20px;height:20px;border:1px solid #c4c5cd;border-radius:3px;background:#fff;"></div>
<div class="t" style="left:279.8px;top:348.00px;font-size:13px;color:#30313d;"><span style="display:inline-block;width:5.7px;text-indent:-0.9px">1</span><span style="letter-spacing:0.72px">3</span><span style="display:inline-block;width:5.7px;text-indent:-0.9px">1</span></div>
<div class="t" style="left:429.6px;top:348.00px;font-size:13px;color:#30313d;"><span style="letter-spacing:0.3px">BVĐVN</span></div>
<div class="t" style="left:586.9px;top:347.66px;font-size:13.4px;color:#30313d;letter-spacing:0.15px;">Bệnh viện Đặng Văn Ngữ</div>
<div class="t" style="right:154.67000000000007px;top:348.00px;font-size:13px;color:#30313d;text-align:right;"><span style="letter-spacing:0.72px">4</span><span style="letter-spacing:-0.3px">.</span><span style="letter-spacing:0.72px">500</span><span style="letter-spacing:-0.3px">.</span><span style="letter-spacing:0.72px">000</span></div>
<div class="t" style="left:1128.6px;top:347.57px;font-size:13.5px;color:#1a72d8;text-shadow:0.25px 0 0 #1a72d8;">Sửa</div>
<svg class="b" style="left:1162.5px;top:352px;" width="10" height="6" viewBox="0 0 10 6"><path d="M0 0h9.5L4.75 5.5z" fill="#1a72d8"/></svg>
<div class="b" style="left:210px;top:396px;width:997px;height:1px;background:#c6c7d0;"></div>
<div class="b" style="left:229px;top:373px;width:20px;height:20px;border:1px solid #c4c5cd;border-radius:3px;background:#fff;"></div>
<div class="t" style="left:279.8px;top:375.36px;font-size:13px;color:#30313d;"><span style="display:inline-block;width:5.7px;text-indent:-0.9px">1</span><span style="letter-spacing:0.72px">3</span><span style="display:inline-block;width:5.7px;text-indent:-0.9px">1</span></div>
<div class="t" style="left:429.6px;top:375.36px;font-size:13px;color:#30313d;"><span style="letter-spacing:0.3px">CTCP</span><span style="display:inline-block;width:5.7px;text-indent:-0.9px">1</span><span style="display:inline-block;width:5.7px;text-indent:-0.9px">1</span><span style="letter-spacing:0.72px">0</span></div>
<div class="t" style="left:586.9px;top:375.02px;font-size:13.4px;color:#30313d;letter-spacing:0.15px;">Công ty cổ phần đầu tư...</div>
<div class="t" style="right:320.56999999999994px;top:375.36px;font-size:13px;color:#30313d;text-align:right;"><span style="letter-spacing:0.72px">73</span><span style="letter-spacing:-0.3px">.</span><span style="letter-spacing:0.72px">946</span><span style="letter-spacing:-0.3px">.</span><span style="letter-spacing:0.72px">252</span></div>
<div class="t" style="left:1128.6px;top:374.93px;font-size:13.5px;color:#1a72d8;text-shadow:0.25px 0 0 #1a72d8;">Sửa</div>
<svg class="b" style="left:1162.5px;top:380px;" width="10" height="6" viewBox="0 0 10 6"><path d="M0 0h9.5L4.75 5.5z" fill="#1a72d8"/></svg>
<div class="b" style="left:210px;top:424px;width:997px;height:1px;background:#c6c7d0;"></div>
<div class="b" style="left:229px;top:400px;width:20px;height:20px;border:1px solid #c4c5cd;border-radius:3px;background:#fff;"></div>
<div class="t" style="left:279.8px;top:402.72px;font-size:13px;color:#30313d;"><span style="display:inline-block;width:5.7px;text-indent:-0.9px">1</span><span style="letter-spacing:0.72px">3</span><span style="display:inline-block;width:5.7px;text-indent:-0.9px">1</span></div>
<div class="t" style="left:429.6px;top:402.72px;font-size:13px;color:#30313d;"><span style="letter-spacing:0.3px">CTCP</span><span style="display:inline-block;width:5.7px;text-indent:-0.9px">1</span><span style="letter-spacing:0.72px">30</span></div>
<div class="t" style="left:586.9px;top:402.38px;font-size:13.4px;color:#30313d;letter-spacing:0.15px;">Công ty cổ phần Diana...</div>
<div class="t" style="right:320.56999999999994px;top:402.72px;font-size:13px;color:#30313d;text-align:right;"><span style="letter-spacing:0.72px">60</span><span style="letter-spacing:-0.3px">.</span><span style="letter-spacing:0.72px">400</span><span style="letter-spacing:-0.3px">.</span><span style="letter-spacing:0.72px">628</span></div>
<div class="t" style="left:1128.6px;top:402.29px;font-size:13.5px;color:#1a72d8;text-shadow:0.25px 0 0 #1a72d8;">Sửa</div>
<svg class="b" style="left:1162.5px;top:407px;" width="10" height="6" viewBox="0 0 10 6"><path d="M0 0h9.5L4.75 5.5z" fill="#1a72d8"/></svg>
<div class="b" style="left:210px;top:451px;width:997px;height:1px;background:#c6c7d0;"></div>
<div class="b" style="left:229px;top:428px;width:20px;height:20px;border:1px solid #c4c5cd;border-radius:3px;background:#fff;"></div>
<div class="t" style="left:279.8px;top:430.08px;font-size:13px;color:#30313d;"><span style="display:inline-block;width:5.7px;text-indent:-0.9px">1</span><span style="letter-spacing:0.72px">3</span><span style="display:inline-block;width:5.7px;text-indent:-0.9px">1</span></div>
<div class="t" style="left:429.6px;top:430.08px;font-size:13px;color:#30313d;"><span style="letter-spacing:0.3px">CTCP</span><span style="display:inline-block;width:5.7px;text-indent:-0.9px">1</span><span style="letter-spacing:0.72px">6</span><span style="display:inline-block;width:5.7px;text-indent:-0.9px">1</span></div>
<div class="t" style="left:586.9px;top:429.74px;font-size:13.4px;color:#30313d;letter-spacing:0.15px;">Công ty CP Bảo vệ thực...</div>
<div class="t" style="right:320.56999999999994px;top:430.08px;font-size:13px;color:#30313d;text-align:right;"><span style="letter-spacing:0.72px">40</span><span style="letter-spacing:-0.3px">.</span><span style="letter-spacing:0.72px">885</span><span style="letter-spacing:-0.3px">.</span><span style="letter-spacing:0.72px">722</span></div>
<div class="t" style="left:1128.6px;top:429.65px;font-size:13.5px;color:#1a72d8;text-shadow:0.25px 0 0 #1a72d8;">Sửa</div>
<svg class="b" style="left:1162.5px;top:434px;" width="10" height="6" viewBox="0 0 10 6"><path d="M0 0h9.5L4.75 5.5z" fill="#1a72d8"/></svg>
<div class="b" style="left:268px;top:478px;width:824px;height:1px;background:#c6c7d0;"></div>
<div class="b" style="left:229px;top:455px;width:20px;height:20px;border:1px solid #c4c5cd;border-radius:3px;background:#fff;"></div>
<div class="t" style="left:279.8px;top:457.44px;font-size:13px;color:#30313d;"><span style="display:inline-block;width:5.7px;text-indent:-0.9px">1</span><span style="letter-spacing:0.72px">3</span><span style="display:inline-block;width:5.7px;text-indent:-0.9px">1</span></div>
<div class="t" style="left:429.6px;top:457.44px;font-size:13px;color:#30313d;"><span style="letter-spacing:0.3px">CTCP</span><span style="letter-spacing:0.72px">286</span></div>
<div class="t" style="left:586.9px;top:457.10px;font-size:13.4px;color:#30313d;letter-spacing:0.15px;">Công ty CP Phát triển...</div>
<div class="t" style="right:320.56999999999994px;top:457.44px;font-size:13px;color:#30313d;text-align:right;"><span style="letter-spacing:0.72px">40</span><span style="letter-spacing:-0.3px">.</span><span style="letter-spacing:0.72px">885</span><span style="letter-spacing:-0.3px">.</span><span style="letter-spacing:0.72px">722</span></div>
<div class="t" style="left:1128.6px;top:457.01px;font-size:13.5px;color:#1a72d8;text-shadow:0.25px 0 0 #1a72d8;">Sửa</div>
<svg class="b" style="left:1162.5px;top:462px;" width="10" height="6" viewBox="0 0 10 6"><path d="M0 0h9.5L4.75 5.5z" fill="#1a72d8"/></svg>
<div class="b" style="left:210px;top:506px;width:997px;height:1px;background:#c6c7d0;"></div>
<div class="b" style="left:229px;top:482px;width:20px;height:20px;border:1px solid #c4c5cd;border-radius:3px;background:#fff;"></div>
<div class="t" style="left:279.8px;top:484.80px;font-size:13px;color:#30313d;"><span style="display:inline-block;width:5.7px;text-indent:-0.9px">1</span><span style="letter-spacing:0.72px">3</span><span style="display:inline-block;width:5.7px;text-indent:-0.9px">1</span></div>
<div class="t" style="left:429.6px;top:484.80px;font-size:13px;color:#30313d;"><span style="letter-spacing:0.3px">CTTNHH</span><span style="display:inline-block;width:5.7px;text-indent:-0.9px">1</span><span style="letter-spacing:0.72px">44</span></div>
<div class="t" style="left:586.9px;top:484.46px;font-size:13.4px;color:#30313d;letter-spacing:0.15px;">Công ty TNHH SINACO...</div>
<div class="t" style="right:320.56999999999994px;top:484.80px;font-size:13px;color:#30313d;text-align:right;"><span style="display:inline-block;width:5.7px;text-indent:-0.9px">1</span><span style="letter-spacing:0.72px">02</span><span style="letter-spacing:-0.3px">.</span><span style="display:inline-block;width:5.7px;text-indent:-0.9px">1</span><span style="letter-spacing:0.72px">59</span><span style="letter-spacing:-0.3px">.</span><span style="letter-spacing:0.72px">304</span></div>
<div class="t" style="left:1128.6px;top:484.37px;font-size:13.5px;color:#1a72d8;text-shadow:0.25px 0 0 #1a72d8;">Sửa</div>
<svg class="b" style="left:1162.5px;top:489px;" width="10" height="6" viewBox="0 0 10 6"><path d="M0 0h9.5L4.75 5.5z" fill="#1a72d8"/></svg>
<div class="b" style="left:210px;top:533px;width:997px;height:1px;background:#c6c7d0;"></div>
<div class="b" style="left:229px;top:510px;width:20px;height:20px;border:1px solid #c4c5cd;border-radius:3px;background:#fff;"></div>
<div class="t" style="left:279.8px;top:512.16px;font-size:13px;color:#30313d;"><span style="display:inline-block;width:5.7px;text-indent:-0.9px">1</span><span style="letter-spacing:0.72px">3</span><span style="display:inline-block;width:5.7px;text-indent:-0.9px">1</span></div>
<div class="t" style="left:429.6px;top:512.16px;font-size:13px;color:#30313d;"><span style="letter-spacing:0.3px">CTTNHH</span><span style="display:inline-block;width:5.7px;text-indent:-0.9px">1</span><span style="letter-spacing:0.72px">89</span></div>
<div class="t" style="left:586.9px;top:511.82px;font-size:13.4px;color:#30313d;letter-spacing:0.15px;">Công ty TNHH Thương...</div>
<div class="t" style="right:320.56999999999994px;top:512.16px;font-size:13px;color:#30313d;text-align:right;"><span style="letter-spacing:0.72px">20</span><span style="letter-spacing:-0.3px">.</span><span style="letter-spacing:0.72px">452</span><span style="letter-spacing:-0.3px">.</span><span style="letter-spacing:0.72px">237</span></div>
<div class="t" style="left:1128.6px;top:511.73px;font-size:13.5px;color:#1a72d8;text-shadow:0.25px 0 0 #1a72d8;">Sửa</div>
<svg class="b" style="left:1162.5px;top:516px;" width="10" height="6" viewBox="0 0 10 6"><path d="M0 0h9.5L4.75 5.5z" fill="#1a72d8"/></svg>
<div class="b" style="left:229px;top:537px;width:20px;height:20px;border:1px solid #c4c5cd;border-radius:3px;background:#fff;"></div>
<div class="t" style="left:279.8px;top:539.52px;font-size:13px;color:#30313d;"><span style="display:inline-block;width:5.7px;text-indent:-0.9px">1</span><span style="letter-spacing:0.72px">3</span><span style="display:inline-block;width:5.7px;text-indent:-0.9px">1</span></div>
<div class="t" style="left:429.6px;top:539.52px;font-size:13px;color:#30313d;"><span style="letter-spacing:0.3px">CTTNHH</span><span style="letter-spacing:0.72px">2</span><span style="display:inline-block;width:5.7px;text-indent:-0.9px">1</span><span style="letter-spacing:0.72px">0</span></div>
<div class="t" style="left:586.9px;top:539.18px;font-size:13.4px;color:#30313d;letter-spacing:0.15px;">Công ty TNHH Green...</div>
<div class="t" style="right:320.56999999999994px;top:539.52px;font-size:13px;color:#30313d;text-align:right;"><span style="letter-spacing:0.72px">20</span><span style="letter-spacing:-0.3px">.</span><span style="letter-spacing:0.72px">452</span><span style="letter-spacing:-0.3px">.</span><span style="letter-spacing:0.72px">237</span></div>
<div class="t" style="left:1128.6px;top:539.09px;font-size:13.5px;color:#1a72d8;text-shadow:0.25px 0 0 #1a72d8;">Sửa</div>
<svg class="b" style="left:1162.5px;top:544px;" width="10" height="6" viewBox="0 0 10 6"><path d="M0 0h9.5L4.75 5.5z" fill="#1a72d8"/></svg>
<div class="b" style="left:267px;top:205px;width:0;height:355px;border-left:1px dotted #c6c7d0;"></div>
<div class="b" style="left:417px;top:205px;width:0;height:355px;border-left:1px dotted #c6c7d0;"></div>
<div class="b" style="left:574px;top:205px;width:0;height:355px;border-left:1px dotted #c6c7d0;"></div>
<div class="b" style="left:761px;top:205px;width:0;height:355px;border-left:1px dotted #c6c7d0;"></div>
<div class="b" style="left:926px;top:205px;width:0;height:355px;border-left:1px dotted #c6c7d0;"></div>
<div class="b" style="left:1092px;top:205px;width:0;height:355px;border-left:1px dotted #c6c7d0;"></div>
<div class="b" style="left:210px;top:560px;width:997px;height:26px;background:#f2f3f7;"></div>
<div class="t" style="left:280.2px;top:565.85px;font-size:14px;color:#1e1f30;-webkit-text-stroke:0.42px #1e1f30;">Tổng</div>
<div class="t" style="right:321.29999999999995px;top:565.85px;font-size:14px;font-weight:700;color:#1e1f30;letter-spacing:0.4px;text-align:right;">2.479.820.538</div>
<div class="t" style="right:155.70000000000005px;top:565.85px;font-size:14px;font-weight:700;color:#1e1f30;letter-spacing:0.5px;text-align:right;">679.500.000</div>
<div class="b" style="left:1207px;top:155px;width:6px;height:300px;background:#b6b9c1;border-radius:3px;"></div>
<div class="t" style="left:210.9px;top:598.45px;font-size:14px;color:#3a3b48;letter-spacing:0.1px;">Tổng số: <b>38</b> bản ghi</div>
<div class="b" style="left:820px;top:592.5px;width:220.5px;height:25.5px;border:1px solid #8a8b95;border-radius:3px;background:#fff;"></div>
<div class="b" style="left:1015.5px;top:593.5px;width:1px;height:23.5px;background:#c9cad3;"></div>
<div class="t" style="left:827.2px;top:598.45px;font-size:14px;color:#2a2b38;letter-spacing:-0.05px;">20 bản ghi trên 1 trang</div>
<svg class="b" style="left:1023px;top:602px;" width="9" height="6" viewBox="0 0 9 6"><path d="M0 0h9L4.5 5.5z" fill="#6a6c78"/></svg>
<div class="t" style="left:1058.3px;top:598.87px;font-size:13.5px;color:#b9bac5;letter-spacing:-0.15px;">Trước</div>
<div class="b" style="left:1111.5px;top:595px;width:20px;height:20.5px;border:1px solid #9a9ba5;background:#fff;"></div>
<div class="t" style="left:1111.5px;width:20px;top:598.45px;font-size:14px;font-weight:700;color:#111;text-align:center;">1</div>
<div class="t" style="left:1155.0px;width:12px;top:598.45px;font-size:14px;color:#222;text-align:center;">2</div>
<div class="t" style="left:1189.3px;top:598.87px;font-size:13.5px;color:#333;">Sau</div>
<svg class="b" style="left:1116px;top:510px;mix-blend-mode:multiply" width="90" height="90" viewBox="0 0 90 90">
<g fill="none" stroke="#c4c4c4">
<circle cx="44" cy="44" r="34" stroke-width="2.6"/>
<circle cx="44" cy="44" r="29.5" stroke-width="1.2"/>
<path d="M30 62 A20 20 0 0 0 58 62" stroke-width="1.5"/>
<path d="M30 26 A20 20 0 0 1 58 26" stroke-width="1.5"/>
</g>
<g transform="rotate(-15 44 46)">
<rect x="1" y="37" width="86" height="18" fill="#b9b9b9"/>
<text x="44" y="51" text-anchor="middle" font-family="Liberation Sans" font-weight="700" font-size="13" fill="#f2f2f2" letter-spacing="-0.2">DỮ LIỆU MẪU</text>
</g>
</svg>
<svg class="b" style="left:1090px;top:126px;" width="112" height="22" viewBox="0 0 112 22"><g fill="none" stroke="#5f616d" stroke-width="1.6" stroke-linecap="round"><circle cx="11" cy="12" r="7.5"/><path d="M70 8L64.5 20"/><circle cx="101" cy="12" r="7.5"/></g></svg>
<div class="b" style="left:1047px;top:106px;width:166px;height:38px;background:#fff;border:3px solid #ee3b3f;box-shadow:0 2px 8px rgba(0,0,0,0.15);"></div>
<div class="t" style="left:1071.1px;top:117.87px;font-size:13.5px;color:#48484e;letter-spacing:0.05px;">Nhập khẩu từ Excel</div>
<div class="b" style="left:1216px;top:279px;width:20px;height:46px;background:#2271e3;box-shadow:0 3px 5px rgba(0,0,0,0.18);"></div>
<svg class="b" style="left:1225px;top:298px;" width="6" height="9" viewBox="0 0 6 9"><path d="M5.2 0v8.5L0 4.25z" fill="#fff"/></svg>
<div class="b" style="left:0px;top:0px;width:1236px;height:624px;border-top:1px solid #4b4947;border-left:1px solid #6c6866;border-right:1px solid #4a4847;border-bottom:1px solid #4a4847;pointer-events:none;"></div>
<div class="b" style="left:0px;top:0px;width:188px;height:1px;background:#6c6866;"></div>
</body></html>
